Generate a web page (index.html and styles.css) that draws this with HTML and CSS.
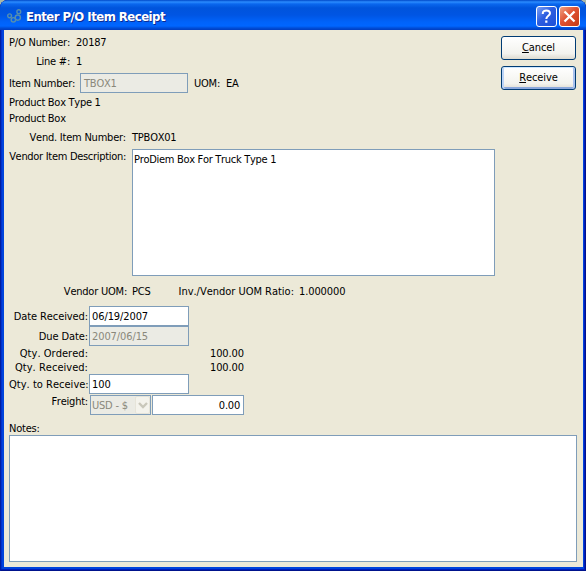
FILE: index.html
```html
<!DOCTYPE html>
<html lang="en">
<head>
<meta charset="utf-8">
<title>Enter P/O Item Receipt</title>
<link rel="stylesheet" href="styles.css">
</head>
<body>
<div class="window">
  <header class="titlebar">
    <svg class="app-icon" width="16" height="16" viewBox="0 0 16 16" fill="none" stroke="#568fae" stroke-width="1.4">
      <circle cx="2.6" cy="6.8" r="1.9"/><circle cx="11.8" cy="2.7" r="1.9"/><circle cx="6.4" cy="10.8" r="2.2"/><circle cx="10.8" cy="8.6" r="2.6"/>
    </svg>
    <h1 class="title">Enter P/O Item Receipt</h1>
    <div class="controls">
      <button class="ctl help" aria-label="Help"><svg width="19" height="19" viewBox="0 0 19 19" fill="none" stroke="#fff" stroke-width="2"><path d="M5.8 7V6C5.8 2.6 13 2.6 13 6.3C13 8.8 9.3 8.8 9.3 12"/><path d="M9.3 13.5v2.2" stroke-width="2.2"/></svg></button>
      <button class="ctl close" aria-label="Close"><svg width="19" height="19" viewBox="0 0 19 19" fill="none" stroke="#fff" stroke-width="2.3"><path d="M4.5 4.5l10 10M14.5 4.5l-10 10"/></svg></button>
    </div>
  </header>
  <main class="client">
    <div class="top">
      <div class="item">
        <div class="row r-po"><span class="label w-po">P/O Number:</span><span class="value">20187</span></div>
        <div class="row r-line"><span class="label w-po">Line #:</span><span class="value">1</span></div>
        <div class="row r-item"><span class="label w-item">Item Number:</span><span class="field disabled f-item">TBOX1</span><span class="uom">UOM:</span><span class="value">EA</span></div>
        <div class="row r-text">Product Box Type 1</div>
        <div class="row r-text2">Product Box</div>
      </div>
      <div class="actions">
        <button class="btn"><u>C</u>ancel</button>
        <button class="btn default"><u>R</u>eceive</button>
      </div>
    </div>
    <div class="row r-vend"><span class="label w-vend">Vend. Item Number:</span><span class="value">TPBOX01</span></div>
    <div class="row r-desc"><span class="label w-vend">Vendor Item Description:</span><div class="area a-desc">ProDiem Box For Truck Type 1</div></div>
    <div class="row r-ratio"><span class="label w-vend">Vendor UOM:</span><span class="value pcs">PCS</span><span class="ratio">Inv./Vendor UOM Ratio:</span><span class="value ratio-num">1.000000</span></div>
    <div class="receipt">
      <div class="line l20"><span class="rl">Date Received:</span><span class="field f-rec">06/19/2007</span></div>
      <div class="line l20"><span class="rl">Due Date:</span><span class="field disabled f-rec">2007/06/15</span></div>
      <div class="line l14 first"><span class="rl">Qty. Ordered:</span><span class="amount">100.00</span></div>
      <div class="line l14"><span class="rl">Qty. Received:</span><span class="amount">100.00</span></div>
      <div class="line l21"><span class="rl">Qty. to Receive:</span><span class="field f-rec">100</span></div>
      <div class="line freight"><span class="rl">Freight:</span><span class="field disabled select"><span>USD - $</span><span class="arrow"><svg width="15" height="18" viewBox="0 0 15 18" fill="none" stroke="#c9c7ba" stroke-width="2.4"><path d="M4 7l4 4 4-4"/></svg></span></span><span class="field money">0.00</span></div>
    </div>
    <div class="notes-label">Notes:</div>
    <div class="area a-notes"></div>
  </main>
</div>
</body>
</html>
```

FILE: styles.css
```css
* { box-sizing: border-box; }
html, body { margin: 0; }
body {
  width: 586px; height: 571px; overflow: hidden; background: #a9b8a8;
  font: 11px/13px "DejaVu Sans Condensed", "DejaVu Sans", sans-serif;
  font-stretch: condensed; font-kerning: none; letter-spacing: -0.22px; color: #000; white-space: nowrap;
}
.window {
  width: 586px; height: 571px; padding: 0 4px 4px; border-radius: 8px 8px 0 0;
  background: #0044dc; overflow: hidden;
  box-shadow: inset 1px 0 #001ea0, inset -1px 0 #00138c, inset 0 -1px #00138c, inset -2px -2px #001dbc, inset 2px 0 #0030ce;
}
.titlebar {
  height: 30px; margin: 0 -4px; padding: 2px 6px 0 7px; display: flex; align-items: center;
  background: linear-gradient(#0048c8 0, #2b8cff 2px, #0a67ee 4px, #0054dc 8px, #0055e3 15px, #0063fa 22px, #0066ff 26px, #004ed8 28px, #003dc0 30px);
}
.app-icon { margin-top: 2px; }
.title {
  margin: 2px auto 0 3px; font: bold 13px/16px "DejaVu Sans Condensed", sans-serif; font-stretch: condensed;
  letter-spacing: -0.52px; color: #fff; text-shadow: 1px 1px #0b2a91;
}
.controls { display: flex; gap: 2px; margin-top: 1px; }
.ctl { width: 21px; height: 21px; padding: 0; border: 1px solid #fff; border-radius: 3px; display: block; }
.ctl svg { display: block; }
.help { background: linear-gradient(135deg, #7ba0f5, #2c5de0 45%, #1c50d8); }
.close { background: linear-gradient(135deg, #f0a183, #df5233 45%, #c63a14); }
.client { height: 537px; background: #ece9d8; padding: 6px 5px 0; margin-right: -1px; }
.top { display: flex; justify-content: space-between; height: 95px; }
.row { display: flex; }
.label { text-align: right; flex: none; }
.value { margin-left: 6px; }
.w-po { width: 61px; }
.w-item { width: 65px; }
.w-vend { width: 117px; }
.r-po { height: 19px; }
.r-line { height: 18px; }
.r-item { height: 23px; align-items: center; padding-bottom: 3px; }
.r-text { height: 16px; }
.r-text, .r-text2 { letter-spacing: -0.28px; }
.field { height: 20px; border: 1px solid #7f9db9; background: #fff; padding: 3px 3px 0; line-height: 13px; flex: none; }
.disabled { background: #ebebe4; color: #8a887b; }
.f-item { width: 108px; margin-left: 6px; }
.uom { margin-left: 6px; }
.actions { width: 75px; margin-right: 2px; }
.btn {
  display: block; width: 75px; height: 24px; padding: 0 0 1px; margin-bottom: 6px; font: inherit; font-stretch: inherit;
  letter-spacing: -0.1px; color: #000; border: 1px solid #003c74; border-radius: 3px;
  background: linear-gradient(#fff, #f3f3ee 75%, #dedbd0);
}
.btn u { text-underline-offset: 1px; }
.default { box-shadow: inset 0 1px #cee7ff, inset 2px 0 #bcd4f6, inset -2px 0 #a9c2ee, inset 0 -2px #8ba8dc; }
.r-vend { height: 18px; }
.r-vend .value { margin-left: 6px; }
.r-desc { height: 136px; }
.r-desc .label { padding-top: 1px; letter-spacing: -0.3px; }
.area { border: 1px solid #7f9db9; background: #fff; padding: 3px 1px; }
.a-desc { width: 363px; height: 127px; margin-left: 6px; letter-spacing: -0.3px; }
.r-ratio { height: 21px; }
.r-ratio .w-vend { width: 118px; }
.pcs { margin-left: 5px; }
.ratio { margin-left: 28px; letter-spacing: -0.02px; }
.ratio-num { margin-left: 5px; letter-spacing: -0.1px; }
.line { display: flex; }
.rl { width: 80px; padding-right: 1px; text-align: right; flex: none; }
.l20 { height: 20px; }
.l20 .rl { padding-top: 4px; letter-spacing: -0.1px; }
.first { margin-top: 1px; }
.l14 { height: 14px; }
.l14 .rl { letter-spacing: 0.03px; }
.l21 { height: 21px; margin-top: -1px; }
.l21 .rl { padding-top: 4px; letter-spacing: 0.02px; }
.f-rec { width: 100px; padding-left: 2px; letter-spacing: -0.1px; }
.amount { width: 155px; text-align: right; letter-spacing: -0.1px; }
.freight { height: 27px; }
.select { width: 61px; margin-left: 1px; padding: 0 0 0 1px; display: flex; justify-content: space-between; align-items: center; }
.arrow { width: 15px; height: 18px; border: 1px solid #e6e4d9; background: #f4f3ec; border-radius: 2px; }
.arrow svg { display: block; margin: -1px; }
.money { width: 92px; margin-left: 1px; text-align: right; }
.notes-label { height: 13px; }
.a-notes { width: 568px; height: 127px; }
```
